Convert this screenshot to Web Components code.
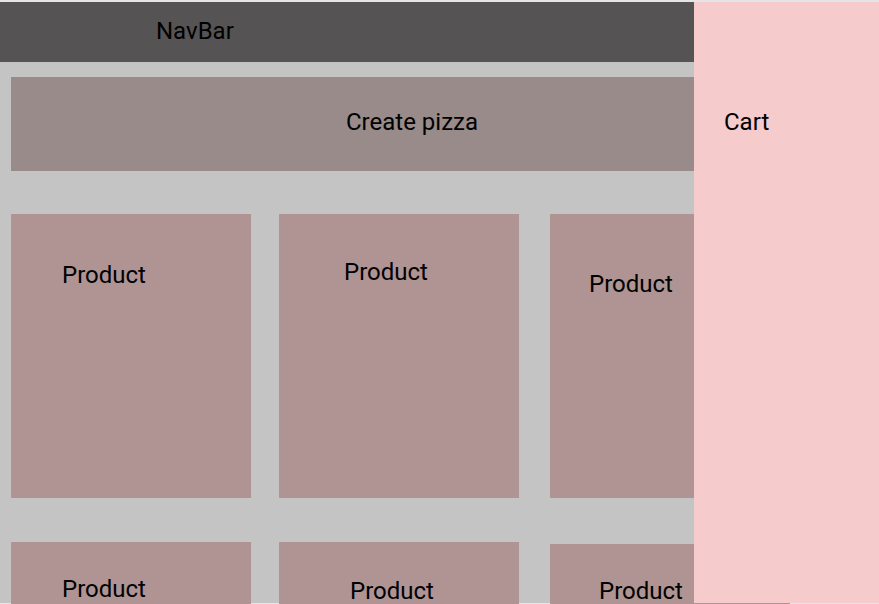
<!DOCTYPE html>
<html lang="en">
<head>
<meta charset="utf-8">
<meta name="viewport" content="width=device-width, initial-scale=1">
<title>Pizza shop</title>
<style>
  body { margin: 0; background: #e5e5e5; color: #000; font: 24px/28px Roboto, sans-serif; }
</style>
</head>
<body>
<pizza-shop>
  <nav-bar slot="nav">NavBar</nav-bar>
  <create-banner>Create pizza</create-banner>
  <product-board>
    <product-column>
      <product-card style="--top: 47px; --left: 51px">Product</product-card>
      <product-card style="--top: 33px; --left: 51px">Product</product-card>
    </product-column>
    <product-column>
      <product-card style="--top: 44px; --left: 65px">Product</product-card>
      <product-card style="--top: 35px; --left: 71px">Product</product-card>
    </product-column>
    <product-column style="--row-gap: 46px">
      <product-card style="--top: 56px; --left: 39px">Product</product-card>
      <product-card style="--top: 33px; --left: 49px">Product</product-card>
    </product-column>
  </product-board>
  <cart-panel slot="cart">Cart</cart-panel>
</pizza-shop>
<script>
  const define = (name, markup) => {
    const template = document.createElement('template');
    template.innerHTML = markup;
    customElements.define(name, class extends HTMLElement {
      constructor() {
        super();
        this.attachShadow({ mode: 'open' }).append(template.content.cloneNode(true));
      }
    });
  };

  define('pizza-shop', `
    <style>
      :host { display: block; box-sizing: border-box; height: 100vh; padding: 2px 0 1px; overflow: hidden; }
      .frame { position: relative; height: 100%; background: #c4c4c4; }
      main { padding: 15px 0 0 11px; }
    </style>
    <div class="frame">
      <slot name="nav"></slot>
      <main><slot></slot></main>
      <slot name="cart"></slot>
    </div>`);

  define('nav-bar', `
    <style>
      :host { display: block; background: #565354; }
      nav { padding: 15px 156px 17px; }
    </style>
    <nav><slot></slot></nav>`);

  define('create-banner', `
    <style>
      :host { display: block; margin-right: 66px; }
      button {
        display: block; width: 100%; margin: 0; padding: 31px 0 35px; border: 0;
        background: #988b8a; color: inherit; font: inherit; cursor: pointer;
      }
    </style>
    <button type="button"><slot></slot></button>`);

  define('product-board', `
    <style>
      :host { display: grid; grid-template-columns: 268px 271px 240px; padding-top: 43px; }
    </style>
    <slot></slot>`);

  define('product-column', `
    <style>
      :host { display: flex; flex-direction: column; gap: var(--row-gap, 44px); }
    </style>
    <slot></slot>`);

  define('product-card', `
    <style>
      :host { display: block; box-sizing: border-box; width: 240px; min-height: 284px; padding: var(--top) 0 0 var(--left); background: #af9493; }
      h2 { margin: 0; font: inherit; }
    </style>
    <article><h2><slot></slot></h2></article>`);

  define('cart-panel', `
    <style>
      :host { display: block; position: absolute; top: 0; right: 0; bottom: 0; box-sizing: border-box; width: 185px; padding: 106px 30px 0; background: #f5cbcb; }
      h2 { margin: 0; font: inherit; }
    </style>
    <aside><h2><slot></slot></h2></aside>`);
</script>
</body>
</html>
